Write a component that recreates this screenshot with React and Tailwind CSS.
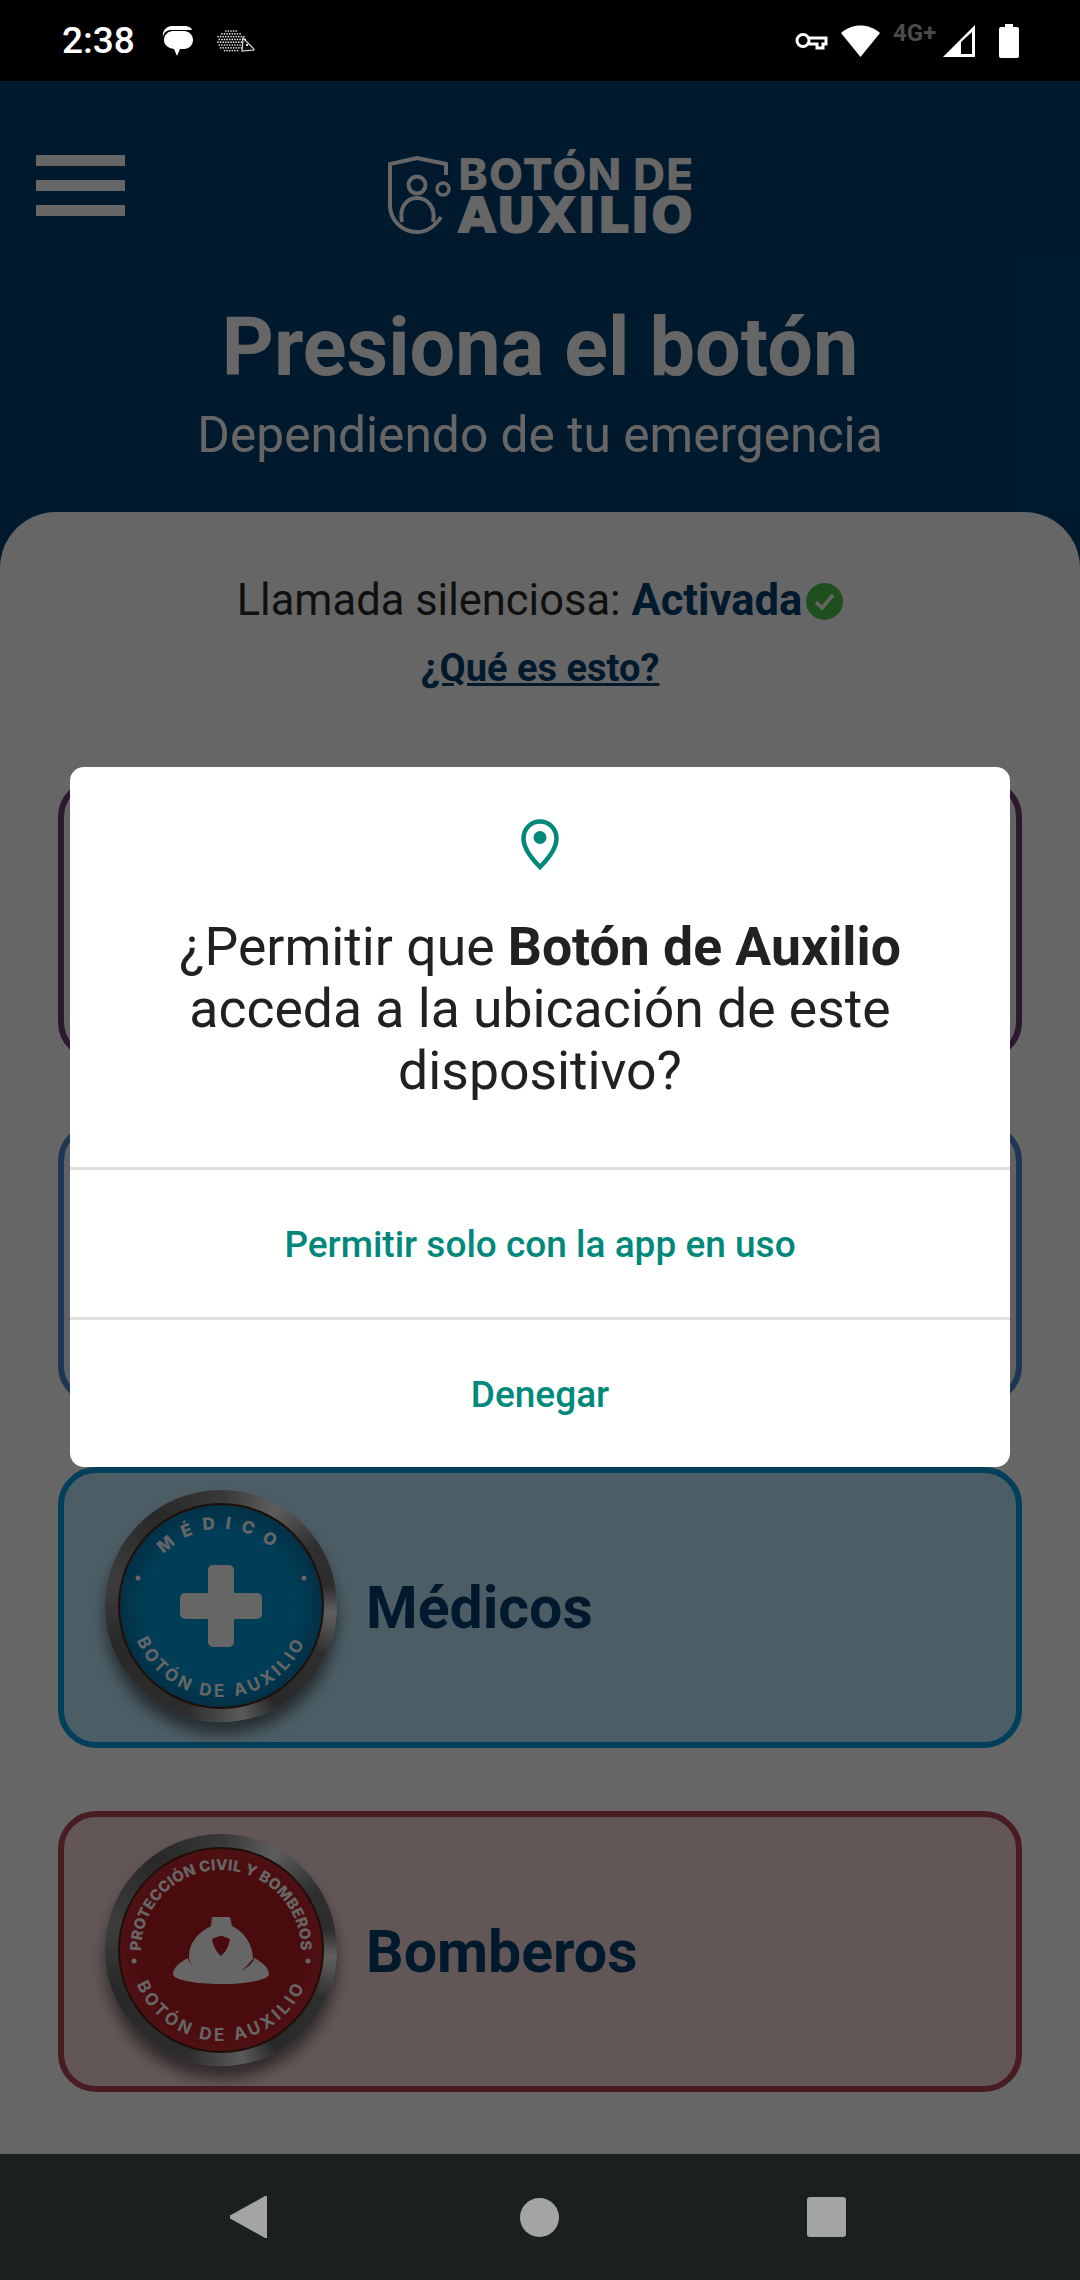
import React from 'react';

const roboto = { fontFamily: 'Roboto, sans-serif' };

// hedgehog spines in the status bar
const spines = [];
for (let row = 0; row < 8; row++) {
    for (let col = 0; col < 12; col++) {
        const x = 2 + col * 2.600 + (row % 2) * 1.300;
        const y = 2 + row * 2.800;
        const dx = (x - 15) / 15;
        const dy = (y - 12) / 11;
        if (dx * dx + dy * dy <= 1) spines.push([x, y]);
    }
}

function Badge({ top, color, deep, children }) {
    return (
        <div className="relative w-[232px] h-[232px] rounded-full shrink-0 -mt-[3px] shadow-[0_12px_14px_rgba(0,0,0,0.5)] bg-[conic-gradient(#8a8a8a,#e8e8e8_8%,#777_16%,#707070_22%,#f0f0f0_26%,#777_32%,#666_42%,#e0e0e0_47%,#707070_55%,#666_70%,#999_78%,#666_90%,#8a8a8a)]">
            <svg className="absolute inset-0" width="232" height="232" viewBox="-116 -116 232 232">
                <defs>
                    <radialGradient id={`face-${top}`}>
                        <stop offset="0.75" stopColor={deep} />
                        <stop offset="1" stopColor={color} />
                    </radialGradient>
                    <path id={`down-${top}`} d="M -91 0 A 91 91 0 0 0 91 0" fill="none" />
                </defs>
                <circle r="103" fill="#4a2410" />
                <circle r="101" fill={`url(#face-${top})`} />
                <text fill="#fff" fontFamily="Inter, sans-serif" fontWeight="700" fontSize="17" letterSpacing="3.400">
                    <textPath href={`#down-${top}`} startOffset="50%" textAnchor="middle">BOTÓN DE AUXILIO</textPath>
                </text>
                {children}
            </svg>
        </div>
    );
}

function EmergencyCard({ name, cardClass, badge }) {
    return (
        <div className={`h-[281px] shrink-0 rounded-[38px] border-[6px] flex items-center pl-[41px] gap-[29px] ${cardClass}`}>
            {badge}
            {name && <span className="text-[59px] font-bold text-[#024071] leading-none" style={roboto}>{name}</span>}
        </div>
    );
}

export default function App() {
    return (
        <div className="w-[1080px] h-[2280px] flex flex-col relative overflow-hidden bg-black" style={roboto}>
            {/* Status bar */}
            <div className="h-[81px] bg-black flex items-center justify-between pl-[62px] pr-[61px] shrink-0">
                <div className="flex items-center">
                    <span className="text-white text-[37px] font-medium leading-none">2:38</span>
                    <svg className="ml-[27px]" width="32" height="30" viewBox="0 0 32 30" fill="#fff">
                        <path d="M10 0h12c4 0 7 1 8 4H9C5 4 2 6 1 11 0 5 4 0 10 0z" />
                        <path d="M11 5h11c5 0 9 4 9 9s-4 9-9 9h-4l-3 7-3-7C6 22 2 19 2 14s4-9 9-9z" />
                    </svg>
                    <svg className="ml-[22px]" width="39" height="24" viewBox="0 0 39 24">
                        {spines.map(([x, y]) => (
                            <circle key={`${x}-${y}`} cx={x} cy={y} r="0.850" fill="#e4e4e4" />
                        ))}
                        <path d="M27 9l10 10 1 2-12 1z" fill="#111" stroke="#ddd" strokeWidth="1.200" />
                        <rect x="30" y="15" width="2" height="2" fill="#ddd" />
                    </svg>
                </div>
                <div className="flex items-center">
                    <svg width="33" height="18" viewBox="0 0 33 18" fill="none" stroke="#fff" strokeWidth="3">
                        <circle cx="8" cy="8.500" r="6" />
                        <path d="M14 6h17v6h-3v4h-6v-4h-8" />
                    </svg>
                    <svg className="ml-[13px]" width="39" height="32" viewBox="0 0 39 32" fill="#fff">
                        <path d="M0 8c11-10 28-10 39 0L19.500 32z" />
                    </svg>
                    <span className="ml-[13px] w-[44px] text-[#4a4a4a] text-[24px] font-bold leading-none self-start -mt-[3px]">4G+</span>
                    <svg className="ml-[6px]" width="32" height="32" viewBox="0 0 32 32">
                        <path fillRule="evenodd" fill="#fff" d="M32 0v32H0zM18 17v12h11V7z" />
                    </svg>
                    <svg className="ml-[24px]" width="20" height="34" viewBox="0 0 20 34" fill="#fff">
                        <path d="M6 0h8v3h4a2 2 0 0 1 2 2v27a2 2 0 0 1-2 2H2a2 2 0 0 1-2-2V5a2 2 0 0 1 2-2h4z" />
                    </svg>
                </div>
            </div>

            {/* App content, dimmed by the permission scrim */}
            <div className="flex-1 relative flex flex-col bg-[#024071]">
                <div className="pt-[64px] shrink-0">
                    <div className="grid grid-cols-[1fr_auto_1fr] items-start px-[36px] h-[90px]">
                        <div className="flex flex-col gap-[14px] w-[89px] mt-[10px]">
                            <div className="h-[11px] bg-white" />
                            <div className="h-[11px] bg-white" />
                            <div className="h-[11px] bg-white" />
                        </div>
                        <div className="flex items-start gap-[8px]">
                            <svg className="mt-[11px]" width="63" height="78" viewBox="0 0 63 78" fill="none" stroke="#fff" strokeWidth="4">
                                <path d="M58 19V8L29 2 2 8v41c0 15 12 27 27 27 10 0 18-6 24-15" />
                                <circle cx="29" cy="29" r="8.500" />
                                <circle cx="55" cy="33" r="6" strokeWidth="3.500" />
                                <path d="M14 66c-3-14 4-24 15-24s19 10 16 24" />
                            </svg>
                            <div className="w-[234px] mt-[9px] text-white">
                                <div className="text-[44px] font-extrabold leading-[40px] tracking-[1.2px] whitespace-nowrap" style={{ fontFamily: 'Inter, sans-serif' }}>BOTÓN DE</div>
                                <div className="text-[48px] font-bold leading-[43px] tracking-[2.5px] whitespace-nowrap [-webkit-text-stroke:2px_#fff]" style={{ fontFamily: '"DejaVu Sans", sans-serif' }}>AUXILIO</div>
                            </div>
                        </div>
                        <div />
                    </div>
                    <h1 className="mt-[67px] text-center text-white text-[81px] font-bold leading-[92px]">Presiona el botón</h1>
                    <p className="text-center text-white text-[49.700px] leading-[58px] mt-[12px]">Dependiendo de tu emergencia</p>
                </div>

                <div className="mt-[48px] flex-1 bg-white rounded-t-[56px] px-[58px] flex flex-col">
                    <div className="pt-[66px] text-[43.500px] leading-[46px] text-[#2a2a2a] flex items-center justify-center">
                        <span>Llamada silenciosa:&nbsp;</span>
                        <span className="font-bold text-[#024071]">Activada</span>
                        <svg className="ml-[4px]" width="37" height="37" viewBox="0 0 37 37">
                            <circle cx="18.500" cy="18.500" r="18.500" fill="#4fc64f" />
                            <path d="M10 19l6 6 11-13" fill="none" stroke="#fff" strokeWidth="3.500" />
                        </svg>
                    </div>
                    <a className="mt-[22px] text-center text-[38px] leading-[44px] font-bold underline text-[#024071]">¿Qué es esto?</a>

                    <div className="mt-[89px] flex flex-col gap-[63px]">
                        <EmergencyCard cardClass="border-[#6b4070] bg-[#fdf3fb]" />
                        <EmergencyCard cardClass="border-[#4888d0] bg-[#eef5fd]" />
                        <EmergencyCard
                            name="Médicos"
                            cardClass="border-[#079ee1] bg-[#bee8fc]"
                            badge={
                                <Badge top="med" color="#0a78b0" deep="#009ad6">
                                    <defs><path id="med-arc" d="M -77 0 A 77 77 0 0 1 77 0" /></defs>
                                    <text fill="#fff" fontFamily="Inter, sans-serif" fontWeight="800" fontSize="17" letterSpacing="10">
                                        <textPath href="#med-arc" startOffset="50%" textAnchor="middle">MÉDICO</textPath>
                                    </text>
                                    <circle cx="-83" cy="-28" r="2.500" fill="#fff" />
                                    <circle cx="83" cy="-28" r="2.500" fill="#fff" />
                                    <rect x="-41" y="-13" width="82" height="26" rx="5" fill="#fff" />
                                    <rect x="-13" y="-41" width="26" height="82" rx="5" fill="#fff" />
                                </Badge>
                            }
                        />
                        <EmergencyCard
                            name="Bomberos"
                            cardClass="border-[#b74559] bg-[#f5d7d7]"
                            badge={
                                <Badge top="fire" color="#c42a2f" deep="#b81c20">
                                    <defs><path id="fire-arc" d="M -80 0 A 80 80 0 0 1 80 0" /></defs>
                                    <text fill="#fff" fontFamily="Inter, sans-serif" fontWeight="800" fontSize="15" letterSpacing="0.200">
                                        <textPath href="#fire-arc" startOffset="50%" textAnchor="middle">PROTECCIÓN CIVIL Y BOMBEROS</textPath>
                                    </text>
                                    <circle cx="-87" cy="11" r="2.500" fill="#fff" />
                                    <circle cx="87" cy="11" r="2.500" fill="#fff" />
                                    <path fill="#fff" fillRule="evenodd" d="M-9 -33H9L11 -24C23 -18 32 -6 32 9L21 21C27 17 33 12 33 8 41 12 48 18 48 24 48 30 25 34 0 34S-48 30-48 24C-48 18-41 12-33 8-33 12-27 17-21 21-27 17-32 14-32 6-32 -8-22 -18-10 -24ZM0 -14C-3 -14-6 -12-9 -11-8 -4-4 3 0 6 4 3 8 -4 9 -11 6 -12 3 -14 0 -14Z" />
                                </Badge>
                            }
                        />
                    </div>
                </div>

                {/* Scrim */}
                <div className="absolute inset-0 bg-black/60" />
            </div>

            {/* Navigation bar */}
            <div className="h-[126px] bg-[#1b1f20] shrink-0 flex items-center pl-[230px]">
                <svg width="37" height="42" viewBox="0 0 37 42" fill="#a3a4a6">
                    <path d="M35 0h2v42h-2L1 23a2 2 0 0 1 0-4z" />
                </svg>
                <div className="ml-[253px] w-[39px] h-[39px] rounded-full bg-[#a3a4a6]" />
                <div className="ml-[248px] w-[39px] h-[40px] rounded-[3px] bg-[#a3a4a6]" />
            </div>

            {/* Location permission dialog */}
            <div className="absolute left-[70px] top-[767px] w-[940px] h-[700px] bg-white rounded-[14px] flex flex-col">
                <div className="h-[400px] flex flex-col items-center pt-[52px]">
                    <svg width="38" height="52" viewBox="0 0 38 52">
                        <path d="M19 2.500C9.500 2.500 2.500 10 2.500 19.500c0 10 9 21 16.500 28.500 7.500-7.500 16.500-18.500 16.500-28.500C35.500 10 28.500 2.500 19 2.500z" fill="none" stroke="#00897b" strokeWidth="4.500" />
                        <circle cx="19" cy="18.500" r="6.500" fill="#00897b" />
                    </svg>
                    <p className="mt-[45px] w-[780px] text-center text-[53.500px] leading-[62px] text-[#212121]">
                        ¿Permitir que <b className="font-bold">Botón de Auxilio</b> acceda a la ubicación de este dispositivo?
                    </p>
                </div>
                <div className="h-[150px] pt-[2px] border-t-[3px] border-[#e0e0e0] flex items-center justify-center text-[#00897b] text-[37px] font-medium">Permitir solo con la app en uso</div>
                <div className="flex-1 pt-[2px] border-t-[3px] border-[#e0e0e0] flex items-center justify-center text-[#00897b] text-[37px] font-medium">Denegar</div>
            </div>
        </div>
    );
}
